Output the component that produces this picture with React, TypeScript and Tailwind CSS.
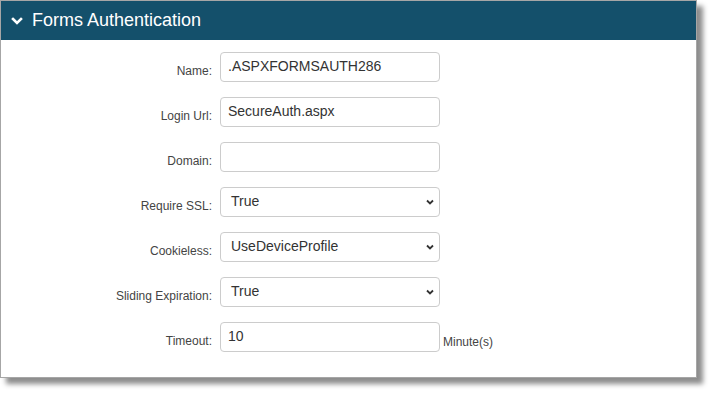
import React from "react";

const Chevron = () => (
  <svg width="12" height="12" viewBox="0 0 12 12" className="shrink-0">
    <path d="M2 4 L6 8 L10 4" stroke="#fff" strokeWidth="2.6" fill="none" strokeLinecap="square" />
  </svg>
);

const SmallChevron = () => (
  <svg width="10" height="10" viewBox="0 0 10 10" className="shrink-0">
    <path d="M2 3.5 L5 6.5 L8 3.5" stroke="#333" strokeWidth="1.8" fill="none" />
  </svg>
);

const Label = ({ children }: { children: React.ReactNode }) => (
  <div className="w-[219px] shrink-0 pr-[8px] text-right text-[12px] text-[#444] pt-[10px]">{children}</div>
);

const TextInput = ({ value }: { value: string }) => (
  <div className="w-[220px] h-[30px] border border-[#ccc] rounded-[4px] bg-white flex items-center px-[7px] pb-[1px] text-[14px] text-[#333]">
    {value}
  </div>
);

const Select = ({ value }: { value: string }) => (
  <div className="w-[220px] h-[30px] border border-[#ccc] rounded-[4px] bg-white flex items-center justify-between pl-[10px] pr-[4px] text-[14px] text-[#333]">
    <span className="pb-[1px]">{value}</span>
    <SmallChevron />
  </div>
);

export default function App() {
  const font = { fontFamily: '"Liberation Sans", Arial, sans-serif' };
  return (
    <div className="w-[712px] h-[394px] bg-white" style={font}>
      <div className="w-[697px] h-[378px] border border-[#a6a6a6] bg-white shadow-[6px_6px_5px_rgba(0,0,0,0.45)] flex flex-col">
        <div className="h-[39px] bg-[#14506b] flex items-center pl-[10px] gap-[9px] text-white text-[18px]">
          <Chevron />
          <span className="pb-[1px]">Forms Authentication</span>
        </div>
        <div className="flex flex-col gap-[15px] pt-[12px]">
          <div className="flex">
            <Label>Name:</Label>
            <TextInput value=".ASPXFORMSAUTH286" />
          </div>
          <div className="flex">
            <Label>Login Url:</Label>
            <TextInput value="SecureAuth.aspx" />
          </div>
          <div className="flex">
            <Label>Domain:</Label>
            <TextInput value="" />
          </div>
          <div className="flex">
            <Label>Require SSL:</Label>
            <Select value="True" />
          </div>
          <div className="flex">
            <Label>Cookieless:</Label>
            <Select value="UseDeviceProfile" />
          </div>
          <div className="flex">
            <Label>Sliding Expiration:</Label>
            <Select value="True" />
          </div>
          <div className="flex">
            <Label>Timeout:</Label>
            <TextInput value="10" />
            <span className="text-[12px] text-[#444] ml-[3px] pt-[11px]">Minute(s)</span>
          </div>
        </div>
      </div>
    </div>
  );
}
